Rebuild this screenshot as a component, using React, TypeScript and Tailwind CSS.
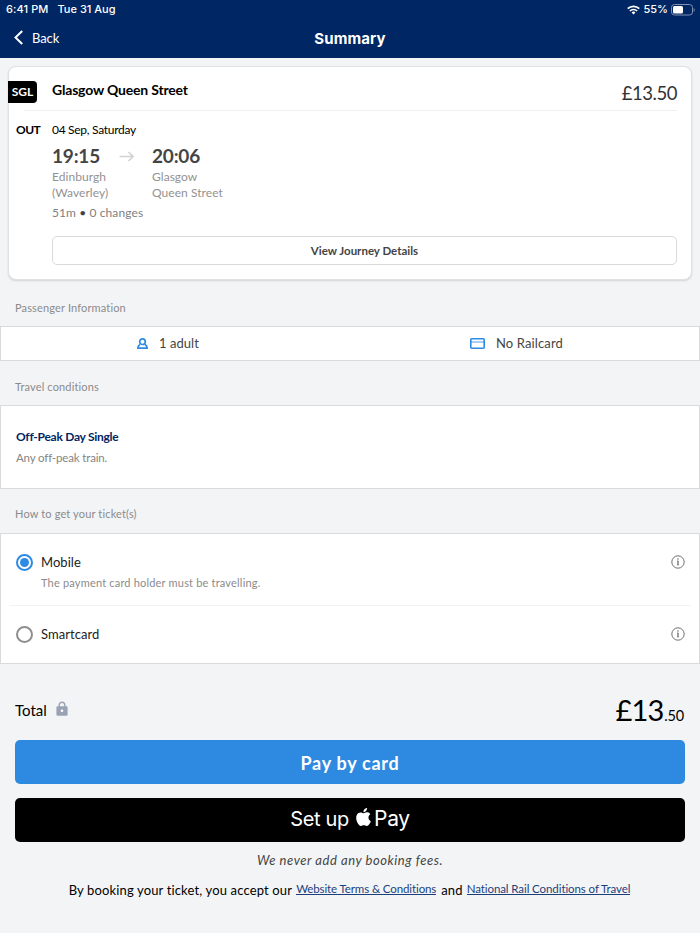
import { clsx } from 'clsx'
import { useState, type ReactNode } from 'react'

type TicketMethod = 'mobile' | 'smartcard'

interface MethodOption {
  id: TicketMethod
  label: string
  note?: string
}

const METHODS: MethodOption[] = [
  { id: 'mobile', label: 'Mobile', note: 'The payment card holder must be travelling.' },
  { id: 'smartcard', label: 'Smartcard' },
]

function StatusBar() {
  return (
    <div className="flex h-[19px] items-center justify-between pr-[5px] pl-1.5 font-['Inter',sans-serif] text-[11px] font-medium">
      <div className="flex gap-[9px]">
        <span className="tracking-[0.1px]">6:41 PM</span>
        <span>Tue 31 Aug</span>
      </div>
      <div className="flex items-center">
        <svg width="13" height="10" viewBox="0 0 13 10" fill="none" stroke="currentColor" strokeWidth="1.7">
          <path d="M0.7 3.7a8.2 8.2 0 0 1 11.6 0" />
          <path d="M2.9 6a5.1 5.1 0 0 1 7.2 0" />
          <path d="M6.5 9.4 4.6 7.5a2.7 2.7 0 0 1 3.8 0Z" fill="currentColor" stroke="none" />
        </svg>
        <span className="ml-[3px]">55%</span>
        <svg className="ml-[3px]" width="24" height="12" viewBox="0 0 24 12">
          <rect x="0.5" y="0.5" width="21" height="10.5" rx="3" fill="none" stroke="#8091b1" />
          <rect x="2" y="2" width="10" height="7.5" rx="1.5" fill="#fff" />
          <path d="M22.7 4v4c1.3-.6 1.3-3.4 0-4Z" fill="#8091b1" />
        </svg>
      </div>
    </div>
  )
}

function Header() {
  return (
    <header className="h-[58px] bg-[#002663] text-white">
      <StatusBar />
      <div className="grid h-[39px] grid-cols-3 items-center">
        <button className="flex items-center pl-[14px] text-[13px] tracking-[-0.1px]">
          <svg className="-mt-0.5" width="9" height="15" viewBox="0 0 9 15" fill="none" stroke="currentColor" strokeWidth="2">
            <path d="M8.2 1 1.5 7.5 8.2 14" />
          </svg>
          <span className="ml-[9px]">Back</span>
        </button>
        <h1 className="pt-0.5 text-center font-['Inter',sans-serif] text-[15px] font-bold tracking-[0.1px]">Summary</h1>
      </div>
    </header>
  )
}

function Station({ time, name }: { time: string; name: [string, string] }) {
  return (
    <div>
      <div className="text-[19px] leading-6 font-bold tracking-[-0.2px] text-[#444]">{time}</div>
      <div className="mt-px text-xs leading-4 tracking-[0.05px] text-[#929292]">
        {name[0]}
        <br />
        {name[1]}
      </div>
    </div>
  )
}

function JourneyCard() {
  return (
    <section className="mx-2 mt-2 h-[214px] rounded-lg border border-[#e0e1e3] bg-white shadow-[0_1px_2px_rgba(0,0,0,0.14)]">
      <div className="ml-[-1px] flex h-[43px] items-start">
        <span className="mt-3.5 flex h-[22px] w-[29px] items-center justify-center rounded-r bg-black text-xs font-bold text-white">
          SGL
        </span>
        <h2 className="mt-[13px] ml-[15px] text-sm leading-5 font-bold tracking-[-0.18px] text-black">
          Glasgow Queen Street
        </h2>
        <span className="mt-3.5 mr-3.5 ml-auto text-[18.5px] leading-6 tracking-[-0.45px] text-[#333]">£13.50</span>
      </div>
      <div className="mr-3.5 ml-[15px] border-t border-[#eeeff0]" />
      <div className="flex pt-[11px] pr-3.5">
        <span className="w-[43px] pl-[7px] text-xs leading-4 font-bold tracking-[-0.5px] text-black">OUT</span>
        <div className="flex-1">
          <div className="text-xs leading-4 tracking-[-0.29px] text-black">04 Sep, Saturday</div>
          <div className="mt-1.5 flex">
            <div className="w-[67px]">
              <Station time="19:15" name={['Edinburgh', '(Waverley)']} />
            </div>
            <svg className="mt-[7px] mr-[18px]" width="15" height="11" viewBox="0 0 15 11" fill="none" stroke="#d3d3d3" strokeWidth="1.6">
              <path d="M0.5 5.5h13.5M9.5 1 14 5.500 9.500 10" />
            </svg>
            <Station time="20:06" name={['Glasgow', 'Queen Street']} />
          </div>
          <div className="mt-1 text-xs leading-4 tracking-[0.1px] text-[#808080]">
            51m <span className="text-[#444]">•</span> 0 changes
          </div>
          <button className="mt-[15px] block h-[29px] w-full rounded-[5px] border border-[#d9d9d9] text-[11.5px] font-bold text-[#444]">
            View Journey Details
          </button>
        </div>
      </div>
    </section>
  )
}

function SectionLabel({ children }: { children: ReactNode }) {
  return <h3 className="px-[15px] text-[11px] leading-4 tracking-[0.15px] text-[#8b8b8b]">{children}</h3>
}

function InfoIcon() {
  return (
    <svg width="14" height="14" viewBox="0 0 14 14" fill="none" stroke="#5f5f5f">
      <circle cx="7" cy="7" r="6.2" strokeWidth="0.9" />
      <path d="M7 5.8v4.3" strokeWidth="1.2" />
      <path d="M6 5.9h1M5.9 10h2.2" strokeWidth="0.5" />
      <circle cx="6.9" cy="4" r="0.7" fill="#5f5f5f" stroke="none" />
    </svg>
  )
}

function Radio({ checked }: { checked: boolean }) {
  return (
    <span
      className={clsx(
        'flex size-[17px] shrink-0 items-center justify-center rounded-full border-2',
        checked ? 'border-[#2e8ae2]' : 'border-[#8f8f8f]',
      )}
    >
      {checked && <span className="size-[9px] rounded-full bg-[#2e8ae2]" />}
    </span>
  )
}

export default function App() {
  const [method, setMethod] = useState<TicketMethod>('mobile')

  return (
    <div className="h-[933px] overflow-hidden bg-[#f3f4f6] font-['Lato',sans-serif]">
      <Header />
      <JourneyCard />

      <div className="mt-5">
        <SectionLabel>Passenger Information</SectionLabel>
      </div>
      <div className="mt-[10px] grid h-[35px] grid-cols-2 items-center border border-[#d9dadc] bg-white text-[13px] tracking-[0.05px] text-[#444]">
        <div className="flex items-center pl-[136px]">
          <svg className="-mt-px" width="11" height="11" viewBox="0 0 11 11" fill="none" stroke="#2e8ae2" strokeWidth="1.7">
            <circle cx="5.5" cy="3.7" r="2.8" />
            <path d="M3 6.400C1.700 7.100.9 8.300.9 10.100h9.200c0-1.800-.8-3-2.100-3.700" />
          </svg>
          <span className="ml-[11px]">1 adult</span>
        </div>
        <div className="flex items-center pl-[120px]">
          <svg className="-mt-px" width="15" height="11" viewBox="0 0 15 11" fill="none" stroke="#2e8ae2">
            <rect x="0.8" y="0.8" width="13.4" height="9.4" rx="1" strokeWidth="1.6" />
            <path d="M1 4h13" strokeWidth="1.2" strokeOpacity="0.7" />
          </svg>
          <span className="ml-[11px] tracking-[0.13px]">No Railcard</span>
        </div>
      </div>

      <div className="mt-[18px]">
        <SectionLabel>Travel conditions</SectionLabel>
      </div>
      <div className="mt-[10px] h-[84px] border border-[#d9dadc] bg-white px-[15px] pt-[23px]">
        <div className="text-xs leading-4 font-bold tracking-[-0.27px] text-[#002663]">Off-Peak Day Single</div>
        <div className="mt-[5px] text-[11.5px] leading-4 tracking-[-0.15px] text-[#858585]">Any off-peak train.</div>
      </div>

      <div className="mt-[17px]">
        <SectionLabel>How to get your ticket(s)</SectionLabel>
      </div>
      <div className="mt-[11px] h-[131px] border border-[#d9dadc] bg-white px-2">
        {METHODS.map((m, i) => (
          <div
            key={m.id}
            className={clsx('pt-[19px] pr-[6px] pl-[7px]', i === 0 ? 'h-[72px] border-b border-[#f2f2f2]' : 'h-[57px]')}
            onClick={() => setMethod(m.id)}
          >
            <div className="flex items-center">
              <Radio checked={method === m.id} />
              <span className="ml-2 text-[13px] leading-[18px] tracking-[0.05px] text-[#222]">{m.label}</span>
              <span className="ml-auto">
                <InfoIcon />
              </span>
            </div>
            {m.note && <p className="mt-1 ml-[25px] text-[11px] leading-4 tracking-[0.19px] text-[#8b8b8b]">{m.note}</p>}
          </div>
        ))}
      </div>

      <footer className="px-[15px] pt-[23px]">
        <div className="flex h-[53px] items-center justify-between text-black">
          <div className="flex items-center">
            <span className="mt-[-6px] text-[15px]">Total</span>
            <svg className="mt-[-11px] ml-[9px]" width="12" height="15" viewBox="0 0 12 15">
              <path d="M3.2 6V4a2.8 2.8 0 0 1 5.6 0v2" fill="none" stroke="#9aa3b3" strokeWidth="1.4" />
              <path d="M1.5 5.3h9q1.1 0 1.1 1.2v7q0 1.2-1.1 1.2h-9Q.4 14.7.4 13.5v-7Q.4 5.3 1.5 5.3Z" fill="#9aa3b3" />
              <circle cx="6" cy="9.8" r="1.3" fill="#fff" />
            </svg>
          </div>
          <div className="mt-[-8px] mr-px leading-none">
            <span className="text-[29px] tracking-[-0.9px]">£13</span>
            <span className="ml-px text-[14.5px] tracking-[-0.2px]">.50</span>
          </div>
        </div>

        <button className="block h-[44px] w-full rounded-[5px] bg-[#2e8ae0] pt-0.5 text-[18px] font-bold tracking-[0.72px] text-white">
          Pay by card
        </button>
        <button className="mt-3.5 flex h-[44px] w-full items-center justify-center rounded-[5px] bg-black pb-0.5 font-['Inter',sans-serif] text-[20px] tracking-[-0.3px] text-white">
          <span>Set up</span>
          <svg className="mr-[3px] mb-1 ml-[7px]" width="15" height="18" viewBox="2 0 20 24" fill="currentColor">
            <path d="M12.152 6.896c-.948 0-2.415-1.078-3.96-1.04-2.04.027-3.91 1.183-4.961 3.014-2.117 3.675-.546 9.103 1.519 12.09 1.013 1.454 2.208 3.09 3.792 3.039 1.52-.065 2.09-.987 3.935-.987 1.831 0 2.35.987 3.96.948 1.637-.026 2.676-1.48 3.676-2.948 1.156-1.688 1.636-3.325 1.662-3.415-.039-.013-3.182-1.221-3.22-4.857-.026-3.04 2.48-4.494 2.597-4.559-1.429-2.09-3.623-2.324-4.39-2.376-2-.156-3.675 1.09-4.61 1.09zM15.53 3.83c.843-1.012 1.4-2.427 1.245-3.83-1.207.052-2.662.805-3.532 1.818-.78.896-1.454 2.338-1.273 3.714 1.338.104 2.715-.688 3.559-1.701" />
          </svg>
          <span className="text-[21px]">Pay</span>
        </button>

        <p className="mt-[9px] text-center text-[13px] leading-[18px] tracking-[0.55px] text-[#444] italic">
          We never add any booking fees.
        </p>
        <p className="mt-3 flex justify-center pr-px text-[13px] leading-[18px] tracking-[0.15px] text-black">
          <span>By booking your ticket, you accept our</span>
          <a className="mr-[5px] ml-1 h-[14px] border-b border-[#1c3f7c] text-[11.5px] leading-4 tracking-[-0.11px] text-[#1c3f7c]">
            Website Terms &amp; Conditions
          </a>
          <span>and</span>
          <a className="ml-1 h-[14px] border-b border-[#1c3f7c] text-[11.5px] leading-4 tracking-[-0.09px] text-[#1c3f7c]">
            National Rail Conditions of Travel
          </a>
        </p>
      </footer>
    </div>
  )
}
